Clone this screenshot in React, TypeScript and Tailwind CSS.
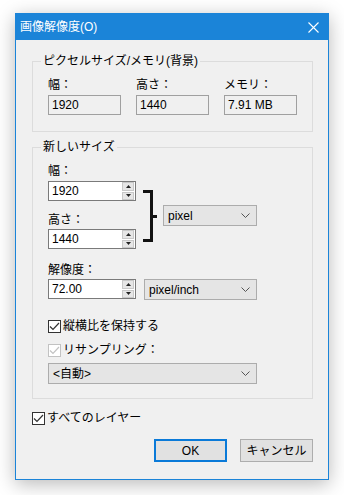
const font = { fontFamily: '"Liberation Sans", "Noto Sans CJK JP", sans-serif' }

function Chevron() {
  return (
    <svg width="9" height="5" viewBox="0 0 9 5" className="ml-auto mr-[6px]">
      <path d="M0.5 0.5 L4.5 4.5 L8.5 0.5" fill="none" stroke="#555" strokeWidth="1" />
    </svg>
  )
}

function Select({ text, className }: { text: string; className: string }) {
  return (
    <div className={`flex items-center h-[21px] border border-[#acacac] bg-[#e5e5e5] pl-[4px] text-[12px] leading-[16px] ${className}`}>
      <span>{text}</span>
      <Chevron />
    </div>
  )
}

function Spin({ value }: { value: string }) {
  return (
    <div className="flex items-center w-[88px] h-[20px] border border-[#7a7a7a] bg-white">
      <span className="pl-[3px] text-[12px] leading-[16px]">{value}</span>
      <div className="ml-auto mr-[1px] flex flex-col h-[18px] w-[12px] gap-[1px]">
        <div className="flex-1 flex items-center justify-center border border-[#c8c8c8] bg-[#e6e6e6]">
          <svg width="5" height="3" viewBox="0 0 5 3"><path d="M2.5 0 L5 3 L0 3 Z" fill="#222" /></svg>
        </div>
        <div className="flex-1 flex items-center justify-center border border-[#c8c8c8] bg-[#e6e6e6]">
          <svg width="5" height="3" viewBox="0 0 5 3"><path d="M0 0 L5 0 L2.5 3 Z" fill="#222" /></svg>
        </div>
      </div>
    </div>
  )
}

function ReadOnly({ label, value }: { label: string; value: string }) {
  return (
    <div className="flex flex-col w-[73px]">
      <div className="text-[12px] leading-[16px]">{label}</div>
      <div className="mt-[2px] h-[20px] border border-[#a0a0a0] pl-[3px] text-[12px] leading-[18px]">{value}</div>
    </div>
  )
}

function Check({ label, disabled, className }: { label: string; disabled?: boolean; className?: string }) {
  const c = disabled ? '#c2c2c2' : '#333'
  return (
    <div className={`flex items-center h-[16px] gap-[2px] text-[12px] leading-[16px] ${className ?? ''}`}>
      <div className={`w-[13px] h-[13px] border bg-white flex items-center justify-center ${disabled ? 'border-[#c2c2c2]' : 'border-[#333]'}`}>
        <svg width="11" height="9" viewBox="0 0 11 9">
          <path d="M1 4.5 L4 7.5 L10 1" fill="none" stroke={c} strokeWidth="1.2" />
        </svg>
      </div>
      <span>{label}</span>
    </div>
  )
}

function Legend({ text }: { text: string }) {
  return (
    <span className="absolute left-[8px] top-[-9px] px-[2px] bg-[#f0f0f0] text-[12px] leading-[16px]">{text}</span>
  )
}

export default function App() {
  return (
    <div className="w-[344px] h-[495px] bg-white pt-[13px] pl-[15px] text-black" style={font}>
      <div className="w-[314px] h-[467px] border border-[#1b84d8] bg-[#f0f0f0] flex flex-col shadow-[0_4px_18px_rgba(0,0,0,0.28)]">
        {/* title bar */}
        <div className="h-[26px] bg-[#1b84d8] flex items-center pl-[4px] text-white text-[12px]">
          <span>画像解像度(O)</span>
          <svg width="11" height="11" viewBox="0 0 11 11" className="ml-auto mr-[9px]">
            <path d="M0.5 0.5 L10.5 10.5 M10.5 0.5 L0.5 10.5" stroke="white" strokeWidth="1.1" />
          </svg>
        </div>

        <div className="pl-[16px] flex flex-col">
          {/* pixel size / memory */}
          <div className="relative mt-[21px] w-[281px] h-[71px] border border-[#dcdcdc] pl-[15px] pt-[15px]">
            <Legend text="ピクセルサイズ/メモリ(背景)" />
            <div className="flex gap-[15px]">
              <ReadOnly label="幅：" value="1920" />
              <ReadOnly label="高さ：" value="1440" />
              <ReadOnly label="メモリ：" value="7.91 MB" />
            </div>
          </div>

          {/* new size */}
          <div className="relative mt-[15px] w-[281px] h-[252px] border border-[#dcdcdc] pl-[15px] pt-[15px] text-[12px] leading-[16px]">
            <Legend text="新しいサイズ" />
            <div className="flex items-start">
              <div className="flex flex-col">
                <div>幅：</div>
                <div className="mt-[2px]"><Spin value="1920" /></div>
                <div className="mt-[11px]">高さ：</div>
                <div className="mt-[1px]"><Spin value="1440" /></div>
              </div>
              <div className="flex items-center mt-[27px] ml-[7px]">
                <div className="w-[10px] h-[52px] border-y-[3px] border-r-[3px] border-[#111]" />
                <div className="w-[4px] h-[3px] bg-[#111]" />
              </div>
              <Select text="pixel" className="w-[94px] mt-[42px] ml-[6px]" />
            </div>

            <div className="mt-[13px]">解像度：</div>
            <div className="mt-[1px] flex gap-[8px]">
              <Spin value="72.00" />
              <Select text="pixel/inch" className="w-[113px] h-[20px]" />
            </div>

            <Check label="縦横比を保持する" className="mt-[18px]" />
            <Check label="リサンプリング：" disabled className="mt-[8px]" />
            <Select text="<自動>" className="w-[209px] h-[20px] mt-[5px]" />
          </div>

          <Check label="すべてのレイヤー" className="mt-[11px]" />

          <div className="mt-[13px] w-[281px] flex justify-end gap-[13px] text-[12px]">
            <div className="w-[73px] h-[23px] border-2 border-[#0a7ad8] bg-[#e1e1e1] flex items-center justify-center">OK</div>
            <div className="w-[73px] h-[23px] border border-[#adadad] bg-[#e1e1e1] flex items-center justify-center">キャンセル</div>
          </div>
        </div>
      </div>
    </div>
  )
}
